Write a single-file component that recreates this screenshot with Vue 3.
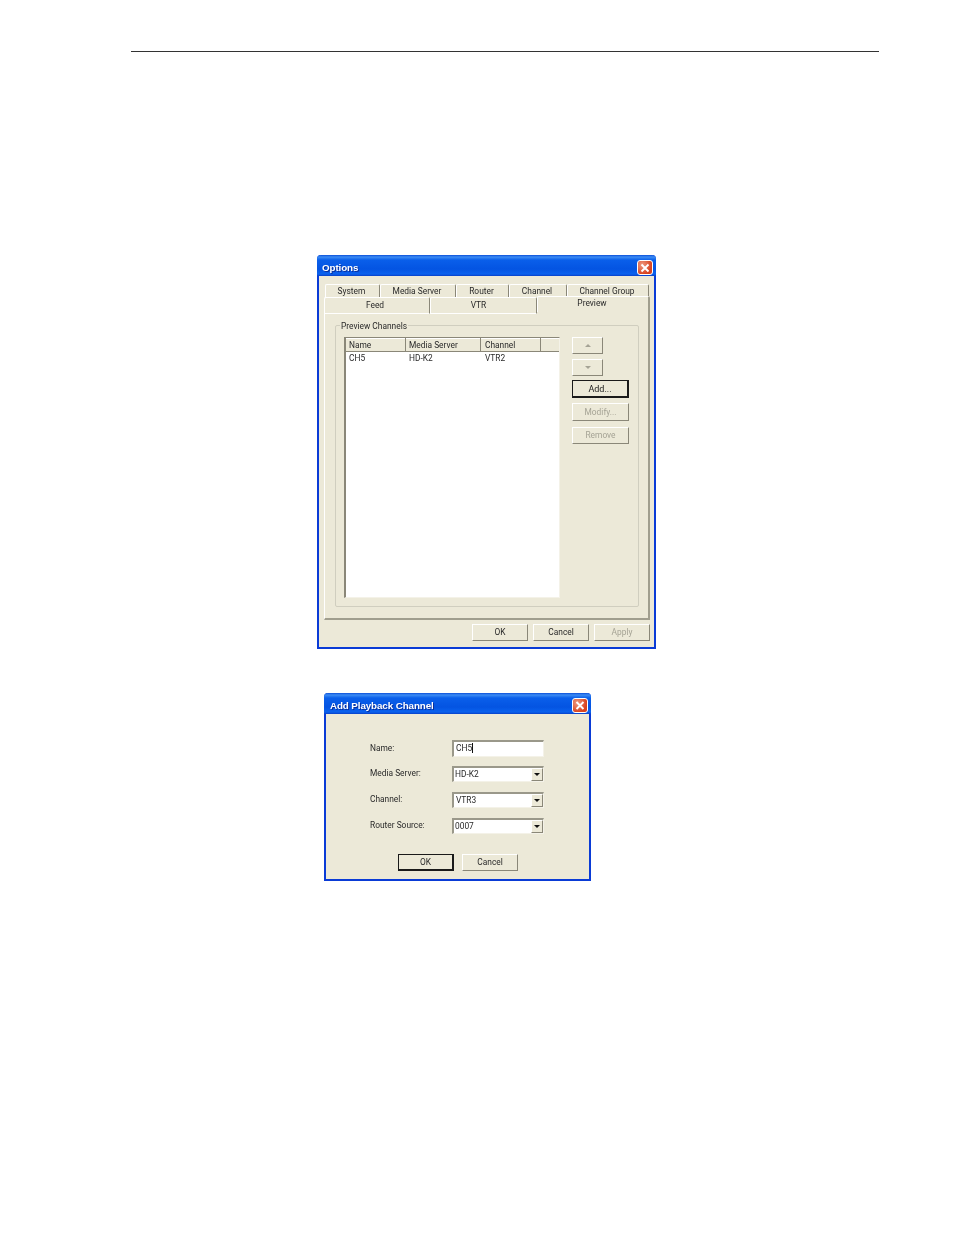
<script setup>
const topTabs = ['System', 'Media Server', 'Router', 'Channel', 'Channel Group']
const bottomTabs = ['Feed', 'VTR', 'Preview']
const columns = ['Name', 'Media Server', 'Channel', '']
const row = ['CH5', 'HD-K2', 'VTR2']
const combos = [
  { label: 'Media Server:', value: 'HD-K2' },
  { label: 'Channel:', value: 'VTR3', indent: true },
  { label: 'Router Source:', value: '0007' },
]
</script>

<template>
  <div class="page">
    <div class="rule"></div>

    <!-- Options dialog -->
    <div class="win options">
      <div class="title">
        <span>Options</span>
        <button class="close">
          <svg viewBox="0 0 16 16" width="16" height="16">
            <path d="M4 4l8 8M12 4l-8 8" stroke="#fff" stroke-width="2.2" fill="none"/>
          </svg>
        </button>
      </div>
      <div class="body">
        <div class="tabs top">
          <div v-for="t in topTabs" :key="t" class="tab">{{ t }}</div>
        </div>
        <div class="tabs bottom">
          <div v-for="t in bottomTabs" :key="t" class="tab" :class="{ active: t === 'Preview' }">{{ t }}</div>
        </div>
        <div class="panel">
          <div class="group">
            <span class="legend">Preview Channels</span>
            <div class="list">
              <div class="list-head">
                <div v-for="(c, i) in columns" :key="i" class="col">{{ c }}</div>
              </div>
              <div class="list-row">
                <div v-for="c in row" :key="c">{{ c }}</div>
              </div>
            </div>
            <div class="side">
              <button class="btn arrow" disabled><i class="tri up"></i></button>
              <button class="btn arrow" disabled><i class="tri down"></i></button>
              <button class="btn wide default add">Add...</button>
              <button class="btn wide" disabled>Modify...</button>
              <button class="btn wide remove" disabled>Remove</button>
            </div>
          </div>
        </div>
        <div class="footer">
          <button class="btn foot">OK</button>
          <button class="btn foot">Cancel</button>
          <button class="btn foot" disabled>Apply</button>
        </div>
      </div>
    </div>

    <!-- Add Playback Channel dialog -->
    <div class="win add-win">
      <div class="title">
        <span>Add Playback Channel</span>
        <button class="close">
          <svg viewBox="0 0 16 16" width="15" height="15">
            <path d="M4 4l8 8M12 4l-8 8" stroke="#fff" stroke-width="2.2" fill="none"/>
          </svg>
        </button>
      </div>
      <div class="form">
        <div class="field">
          <label>Name:</label>
          <div class="input name">CH5<i class="caret"></i></div>
        </div>
        <div v-for="c in combos" :key="c.label" class="field">
          <label>{{ c.label }}</label>
          <div class="input combo">
            <span :class="{ indent: c.indent }">{{ c.value }}</span>
            <div class="drop"><i class="tri down dark"></i></div>
          </div>
        </div>
        <div class="form-actions">
          <button class="btn dlg default">OK</button>
          <button class="btn dlg">Cancel</button>
        </div>
      </div>
    </div>
  </div>
</template>

<style scoped>
.page {
  width: 954px;
  height: 1235px;
  padding-top: 51px;
  box-sizing: border-box;
  background: #fff;
  overflow: hidden;
  font-family: Roboto, "Liberation Sans", Arial, sans-serif;
  font-size: 8.4px;
  color: #2a2a2a;
}
.rule { height: 1px; width: 748px; margin-left: 131px; background: #333; }

/* window frame */
.win {
  box-sizing: border-box;
  border: 2px solid #0a3bd6;
  border-top: 0;
  border-radius: 4px 4px 0 0;
  background: #ece9d8;
  filter: blur(0.3px);
}
.options { width: 339px; height: 394px; margin: 203px 0 0 317px; }
.add-win { width: 267px; height: 188px; margin: 44px 0 0 324px; }
.title {
  box-sizing: border-box;
  height: 21px;
  margin: 0 -2px;
  padding: 4px 3px 0 5px;
  display: flex;
  align-items: center;
  justify-content: space-between;
  border-radius: 4px 4px 0 0;
  background: linear-gradient(#0a4fd8 0, #3c8cf4 2px, #0a5fea 5px, #0454e2 14px, #0a62ee 19px, #0840c8 21px);
  color: #fff;
  font-family: "Liberation Sans", Arial, sans-serif;
  font-size: 9.8px;
  font-weight: bold;
  letter-spacing: -0.1px;
  text-shadow: 1px 1px 0 #0b2f9a;
}
.add-win .title { padding-left: 6px; }
.close {
  width: 16px;
  height: 15px;
  padding: 0;
  display: flex;
  align-items: center;
  justify-content: center;
  border: 1px solid #fff;
  border-radius: 3px;
  background: radial-gradient(circle at 30% 30%, #ee9a80, #d8431f 70%);
}

/* tabs */
.body { padding: 8px 3px 0 6px; }
.tabs { display: grid; }
.tabs.top { grid-template-columns: 55px 76px 53px 58px 82px; height: 13px; }
.tabs.bottom { grid-template-columns: 106px 107px 113px; height: 14px; margin-left: -1px; }
.tab {
  box-sizing: border-box;
  padding-right: 2px;
  text-align: center;
  line-height: 13px;
  border-top: 1px solid #fff;
  border-left: 1px solid #fff;
  border-right: 1px solid #8a8778;
  border-radius: 2px 2px 0 0;
}
.tabs.bottom .tab { line-height: 15px; border-bottom: 1px solid #fff; padding-right: 4px; }
.tabs.bottom .tab:nth-child(2) { padding-right: 10px; }
.tabs.bottom .tab.active {
  height: 16px;
  margin-top: -1px;
  padding-right: 2px;
  line-height: 12px;
  border-bottom: 0;
  border-right: 2px solid #a09e8e;
  background: #ece9d8;
  position: relative;
  z-index: 1;
}
.panel {
  box-sizing: border-box;
  width: 326px;
  height: 309px;
  margin-left: -1px;
  padding: 14px 11px 12px 10px;
  border-left: 1px solid #fff;
  border-right: 2px solid #a09e8e;
  border-bottom: 2px solid #a09e8e;
}

/* group box */
.group {
  position: relative;
  box-sizing: border-box;
  width: 304px;
  height: 282px;
  padding: 11px 0 0 8px;
  display: flex;
  gap: 12px;
  border: 1px solid #d0cebf;
  border-radius: 2px;
}
.legend {
  position: absolute;
  left: 4px;
  top: -5px;
  padding: 0 1px;
  background: #ece9d8;
  line-height: 11px;
}
.list {
  box-sizing: border-box;
  width: 216px;
  height: 261px;
  background: #fff;
  border-top: 1px solid #8a8778;
  border-left: 2px solid #8a8778;
  border-right: 1px solid #f4f2e8;
  border-bottom: 1px solid #f4f2e8;
}
.list-head {
  display: grid;
  grid-template-columns: 60px 75px 60px 1fr;
  height: 14px;
  background: #ece9d8;
  box-shadow: inset 0 -1px 0 #8a8778, inset 0 1px 0 #fff;
}
.col {
  padding-left: 3px;
  line-height: 14px;
  border-right: 1px solid #8a8778;
}
.col:nth-child(3) { padding-left: 4px; }
.col:last-child { border-right: 0; }
.list-row {
  display: grid;
  grid-template-columns: 60px 75px 60px;
  line-height: 13px;
}
.list-row div { padding-left: 3px; }
.list-row div:last-child { padding-left: 4px; }

/* buttons */
.btn {
  box-sizing: border-box;
  padding: 0;
  font: inherit;
  color: #2a2a2a;
  background: #ece9d8;
  border: 1px solid;
  border-color: #fff #8a8778 #8a8778 #fff;
  display: flex;
  align-items: center;
  justify-content: center;
}
.btn:disabled { color: #a5a395; }
.btn.default { border: 1px solid #1a1a1a; border-right-width: 2px; border-bottom-width: 2px; }
.side { display: flex; flex-direction: column; gap: 5px; }
.arrow { width: 31px; height: 17px; }
.wide { width: 57px; height: 18px; }
.add { margin-top: -1px; color: #1a1a1a; font-size: 9px; }
.remove { margin-top: 1px; height: 17px; padding-bottom: 1px; }
.tri { width: 0; height: 0; border-left: 3px solid transparent; border-right: 3px solid transparent; }
.tri.up { border-bottom: 3px solid #a5a395; }
.tri.down { border-top: 3px solid #a5a395; }
.tri.down.dark { border-top-color: #111; }
.footer { display: flex; justify-content: flex-end; gap: 5px; margin: 4px 0 0 -1px; width: 326px; }
.foot { width: 56px; height: 17px; padding-bottom: 1px; }

/* add channel form */
.form { padding: 24px 0 0 44px; }
.field {
  display: grid;
  grid-template-columns: 82px 92px;
  align-items: center;
  height: 18px;
  margin-bottom: 8px;
}
.input {
  box-sizing: border-box;
  background: #fff;
  border-top: 2px solid #9a988a;
  border-left: 2px solid #9a988a;
  border-right: 1px solid #f4f2e8;
  border-bottom: 1px solid #f4f2e8;
}
.input.name { height: 17px; margin-top: 2px; padding-left: 2px; line-height: 13px; }
.caret {
  display: inline-block;
  width: 1px;
  height: 10px;
  background: #111;
  vertical-align: -2px;
}
.combo {
  height: 16px;
  margin-top: 1px;
  line-height: 13px;
  display: flex;
  justify-content: space-between;
}
.combo span { padding-left: 1px; }
.combo span.indent { padding-left: 2px; }
.drop {
  width: 12px;
  height: 13px;
  background: #ece9d8;
  border: 1px solid;
  border-color: #fff #8a8778 #8a8778 #fff;
  box-sizing: border-box;
  display: flex;
  align-items: center;
  justify-content: center;
}
.form-actions { display: flex; gap: 8px; margin: 20px 0 0 28px; }
.dlg { width: 56px; height: 17px; padding-bottom: 1px; }
.dlg.default { border-width: 1px 2px 2px 1px; }
</style>
